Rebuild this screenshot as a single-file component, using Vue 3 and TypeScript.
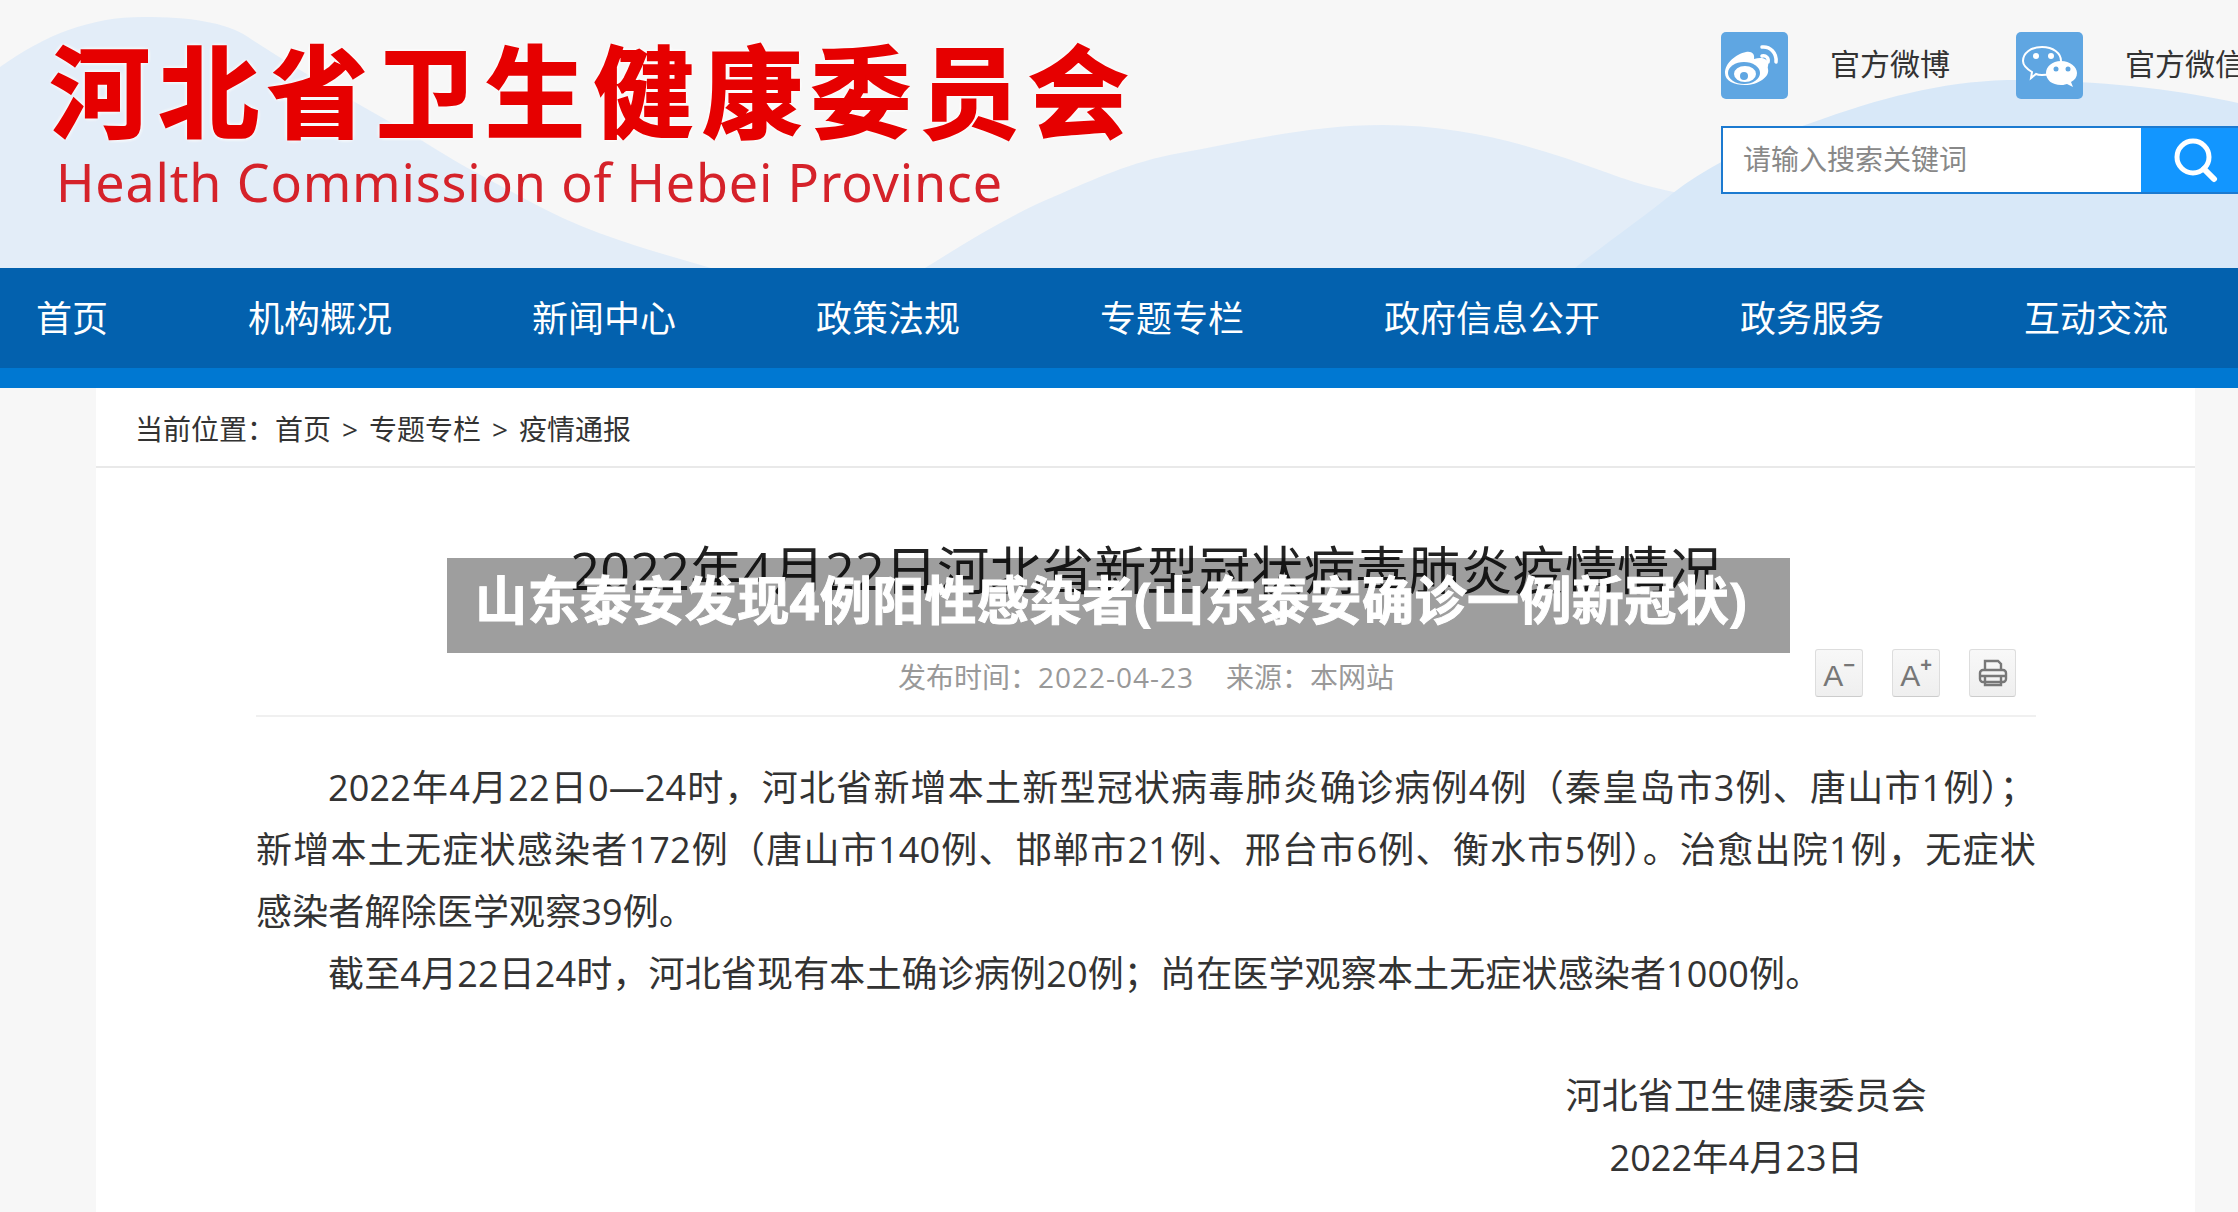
<script setup lang="ts">
const navItems = ['首页', '机构概况', '新闻中心', '政策法规', '专题专栏', '政府信息公开', '政务服务', '互动交流']
</script>

<template>
  <div class="page">
    <header class="header">
      <svg class="hills" width="2238" height="268" viewBox="0 0 2238 268">
        <path
          d="M0 67C45 35 90 17 143 17C190 17 225 22 248 37C310 78 370 110 421 140C460 165 490 180 527 200C590 235 650 250 711 268L925 268C970 240 1010 215 1053 197C1095 179 1130 162 1180 153C1240 142 1310 125 1383 125C1470 125 1545 150 1608 173C1640 185 1680 196 1724 198L1800 268L0 268Z"
          fill="#e3edf8"
        />
        <path
          d="M1575 268C1610 240 1640 220 1673 193C1710 165 1760 140 1811 123C1880 98 1940 82 2007 80C2100 80 2180 90 2238 103L2238 268Z"
          fill="#d8e8f8"
        />
      </svg>

      <div class="logo">
        <div class="logo-cn">河北省卫生健康委员会</div>
        <div class="logo-en">Health Commission of Hebei Province</div>
      </div>

      <div class="tools">
        <div class="social">
          <svg class="social-icon" viewBox="0 0 67 67">
            <rect width="67" height="67" rx="5" fill="#5fa6e2" />
            <path
              d="M4 41C4 31 15 22 25 20C31 19 34 22 33 27C40 25 46 26 47 31C48 33 46 35 47 37C49 45 37 53 24 53C13 53 4 49 4 41Z"
              fill="#fff"
            />
            <ellipse cx="23" cy="41" rx="16" ry="11" fill="#5fa6e2" />
            <ellipse cx="24" cy="42" rx="11" ry="8" fill="#fff" />
            <circle cx="23" cy="44" r="4" fill="#5fa6e2" />
            <path d="M41 15C49 14 56 21 55 30" fill="none" stroke="#fff" stroke-width="3.5" stroke-linecap="round" />
            <path d="M41 24C45 23 48 26 47 30" fill="none" stroke="#fff" stroke-width="3.5" stroke-linecap="round" />
          </svg>
          <span class="social-text">官方微博</span>
          <svg class="social-icon second" viewBox="0 0 67 67">
            <rect width="67" height="67" rx="5" fill="#5fa6e2" />
            <path
              d="M26 15C37 15 45 21 45 29C45 37 37 43 26 43C24 43 22 43 20 42L15 46L16 40C11 37 7 34 7 29C7 21 15 15 26 15Z"
              fill="none"
              stroke="#fff"
              stroke-width="2"
            />
            <circle cx="20" cy="24" r="3" fill="#fff" />
            <circle cx="35" cy="24" r="3" fill="#fff" />
            <path d="M45 29C54 29 61 35 61 41C61 45 59 48 55 50L57 55L51 52C48 53 46 53 45 53C36 53 30 48 30 41C30 35 36 29 45 29Z" fill="#fff" />
            <circle cx="40" cy="37" r="2.5" fill="#5fa6e2" />
            <circle cx="52" cy="37" r="2.5" fill="#5fa6e2" />
          </svg>
          <span class="social-text">官方微信</span>
        </div>
        <div class="search">
          <span class="search-input">请输入搜索关键词</span>
          <span class="search-btn">
            <svg width="46" height="46" viewBox="0 0 46 46">
              <circle cx="20" cy="20" r="16" fill="none" stroke="#fff" stroke-width="5" />
              <path d="M31 32L41 42" stroke="#fff" stroke-width="6" stroke-linecap="round" />
            </svg>
          </span>
        </div>
      </div>
    </header>

    <nav class="nav">
      <a v-for="item in navItems" :key="item" class="nav-item">{{ item }}</a>
    </nav>

    <main class="main">
      <div class="crumb">当前位置：首页<span class="crumb-sep">&gt;</span>专题专栏<span class="crumb-sep">&gt;</span>疫情通报</div>

      <article class="article">
        <h1 class="title">2022年4月22日河北省新型冠状病毒肺炎疫情情况</h1>

        <div class="meta">
          <span></span>
          <span class="meta-text">发布时间：<span class="meta-date">2022-04-23</span><i class="sep"></i>来源：本网站</span>
          <div class="meta-tools">
            <span class="tool"><span class="tool-a">A</span><sup>−</sup></span>
            <span class="tool"><span class="tool-a">A</span><sup>+</sup></span>
            <span class="tool tool-print">
              <svg width="30" height="30" viewBox="0 0 30 30" fill="none" stroke="#777" stroke-width="2.4">
                <path d="M7 12V3H20L23 6V12" />
                <rect x="2" y="12" width="26" height="12" rx="3" />
                <path d="M2 18H28M7 18V27H23V18" />
              </svg>
            </span>
          </div>
        </div>

        <div class="content">
          <p class="para">
            <span class="line first">2022年4月22日0—24时，河北省新增本土新型冠状病毒肺炎确诊病例4例（秦皇岛市3例、唐山市1例）；</span>
            <span class="line">新增本土无症状感染者172例（唐山市140例、邯郸市21例、邢台市6例、衡水市5例）。治愈出院1例，无症状</span>
            <span class="line last">感染者解除医学观察39例。</span>
          </p>
          <p class="para">
            <span class="line first last">截至4月22日24时，河北省现有本土确诊病例20例；尚在医学观察本土无症状感染者1000例。</span>
          </p>
          <p class="sign">河北省卫生健康委员会</p>
          <p class="date">2022年4月23日</p>
        </div>

        <div class="overlay">山东泰安发现4例阳性感染者(山东泰安确诊一例新冠状)</div>
      </article>
    </main>
  </div>
</template>

<style scoped>
.page {
  width: 2238px;
  height: 1212px;
  overflow: hidden;
  background: #f7f7f7;
  font-family: "Open Sans", "Noto Sans CJK SC", sans-serif;
  color: #333;
}

.header {
  position: relative;
  height: 268px;
  display: flex;
  justify-content: space-between;
  overflow: hidden;
}

.hills {
  position: absolute;
  left: 0;
  top: 0;
}

.logo {
  position: relative;
  padding: 29px 0 0 50px;
}

.logo-cn {
  font-size: 100px;
  line-height: 124px;
  font-weight: 700;
  letter-spacing: 8.7px;
  color: #e60000;
  -webkit-text-stroke: 2px #e60000;
  text-shadow: 0 0 5px #fff, 0 0 5px #fff, 0 0 5px #fff;
  white-space: nowrap;
}

.logo-en {
  margin: 1px 0 0 6px;
  font-family: "Noto Sans", sans-serif;
  font-size: 52px;
  line-height: 56px;
  letter-spacing: 0.83px;
  color: #d5222a;
  white-space: nowrap;
}

.tools {
  position: relative;
  width: 517px;
  padding-top: 32px;
  overflow: hidden;
  flex: none;
}

.social {
  display: flex;
  align-items: center;
  width: 560px;
  height: 67px;
}

.social-icon {
  width: 67px;
  height: 67px;
  flex: none;
}

.social-icon.second {
  margin-left: 66px;
}

.social-text {
  margin-left: 42px;
  font-size: 30px;
  line-height: 63px;
  height: 67px;
  color: #333;
  white-space: nowrap;
}

.search {
  display: flex;
  width: 560px;
  height: 68px;
  margin-top: 27px;
  border: 2px solid #1c7ad0;
  box-sizing: border-box;
}

.search-input {
  width: 418px;
  padding-left: 20px;
  box-sizing: border-box;
  background: #fff;
  font-size: 28px;
  line-height: 62px;
  color: #888;
}

.search-btn {
  flex: 1;
  display: flex;
  align-items: center;
  padding-left: 32px;
  background: #1296ff;
}

.nav {
  display: flex;
  gap: 140px;
  height: 100px;
  padding-left: 36px;
  background: #0361ae;
  border-bottom: 20px solid #0078d2;
}

.nav-item {
  font-size: 36px;
  line-height: 102px;
  color: #fff;
  white-space: nowrap;
}

.main {
  width: 2099px;
  height: 824px;
  margin-left: 96px;
  background: #fff;
}

.crumb {
  height: 80px;
  padding-left: 39px;
  box-sizing: border-box;
  border-bottom: 2px solid #e9e9e9;
  font-size: 28px;
  line-height: 82px;
  color: #333;
}

.crumb-sep {
  margin: 0 11px;
}

.article {
  position: relative;
  padding: 0 159px 0 160px;
}

.title {
  margin: 0;
  padding-top: 68px;
  font-size: 52px;
  line-height: 68px;
  font-weight: 400;
  letter-spacing: 0.3px;
  text-align: center;
  color: #222;
  white-space: nowrap;
}

.meta {
  display: grid;
  grid-template-columns: 1fr auto 1fr;
  height: 66px;
  margin-top: 45px;
  border-bottom: 2px solid #f0f0f0;
}

.meta-text {
  font-size: 28px;
  line-height: 56px;
  color: #999;
  white-space: nowrap;
}

.meta-date {
  letter-spacing: 1px;
}

.sep {
  display: inline-block;
  width: 32px;
}

.meta-tools {
  display: flex;
  justify-content: flex-end;
  gap: 29px;
  padding-right: 20px;
}

.tool {
  display: flex;
  justify-content: center;
  align-items: center;
  width: 48px;
  height: 48px;
  box-sizing: border-box;
  border: 1px solid #ddd;
  border-bottom-color: #ccc;
  border-radius: 3px;
  background: linear-gradient(#f8f8f8, #efefef);
  color: #777;
}

.tool-print {
  width: 47px;
}

.tool-a {
  font-family: "Liberation Sans", sans-serif;
  font-size: 30px;
  line-height: 30px;
  margin-top: 6px;
}

.tool sup {
  font-family: "Liberation Sans", sans-serif;
  font-size: 20px;
  line-height: 20px;
  font-weight: 700;
  margin-top: -16px;
}

.content {
  padding-top: 40px;
  font-size: 36px;
  line-height: 62px;
  letter-spacing: 0.15px;
  color: #333;
}

.para {
  margin: 0;
}

.line {
  display: block;
  text-align: justify;
  text-align-last: justify;
}

.line.first {
  text-indent: 2em;
}

.line.last {
  text-align-last: left;
}

.sign,
.date {
  margin: 0;
  text-align: right;
}

.sign {
  margin-top: 60px;
  padding-right: 109px;
}

.date {
  padding-right: 173px;
}

.overlay {
  position: absolute;
  left: 351px;
  top: 90px;
  width: 1343px;
  height: 95px;
  padding-left: 28px;
  box-sizing: border-box;
  background: rgba(0, 0, 0, 0.38);
  font-size: 52px;
  line-height: 84px;
  font-weight: 700;
  letter-spacing: 0.43px;
  color: #fff;
  -webkit-text-stroke: 1px #fff;
  white-space: nowrap;
}
</style>

<style>
html,
body {
  margin: 0;
  overflow: hidden;
  background: #f7f7f7;
}
</style>
